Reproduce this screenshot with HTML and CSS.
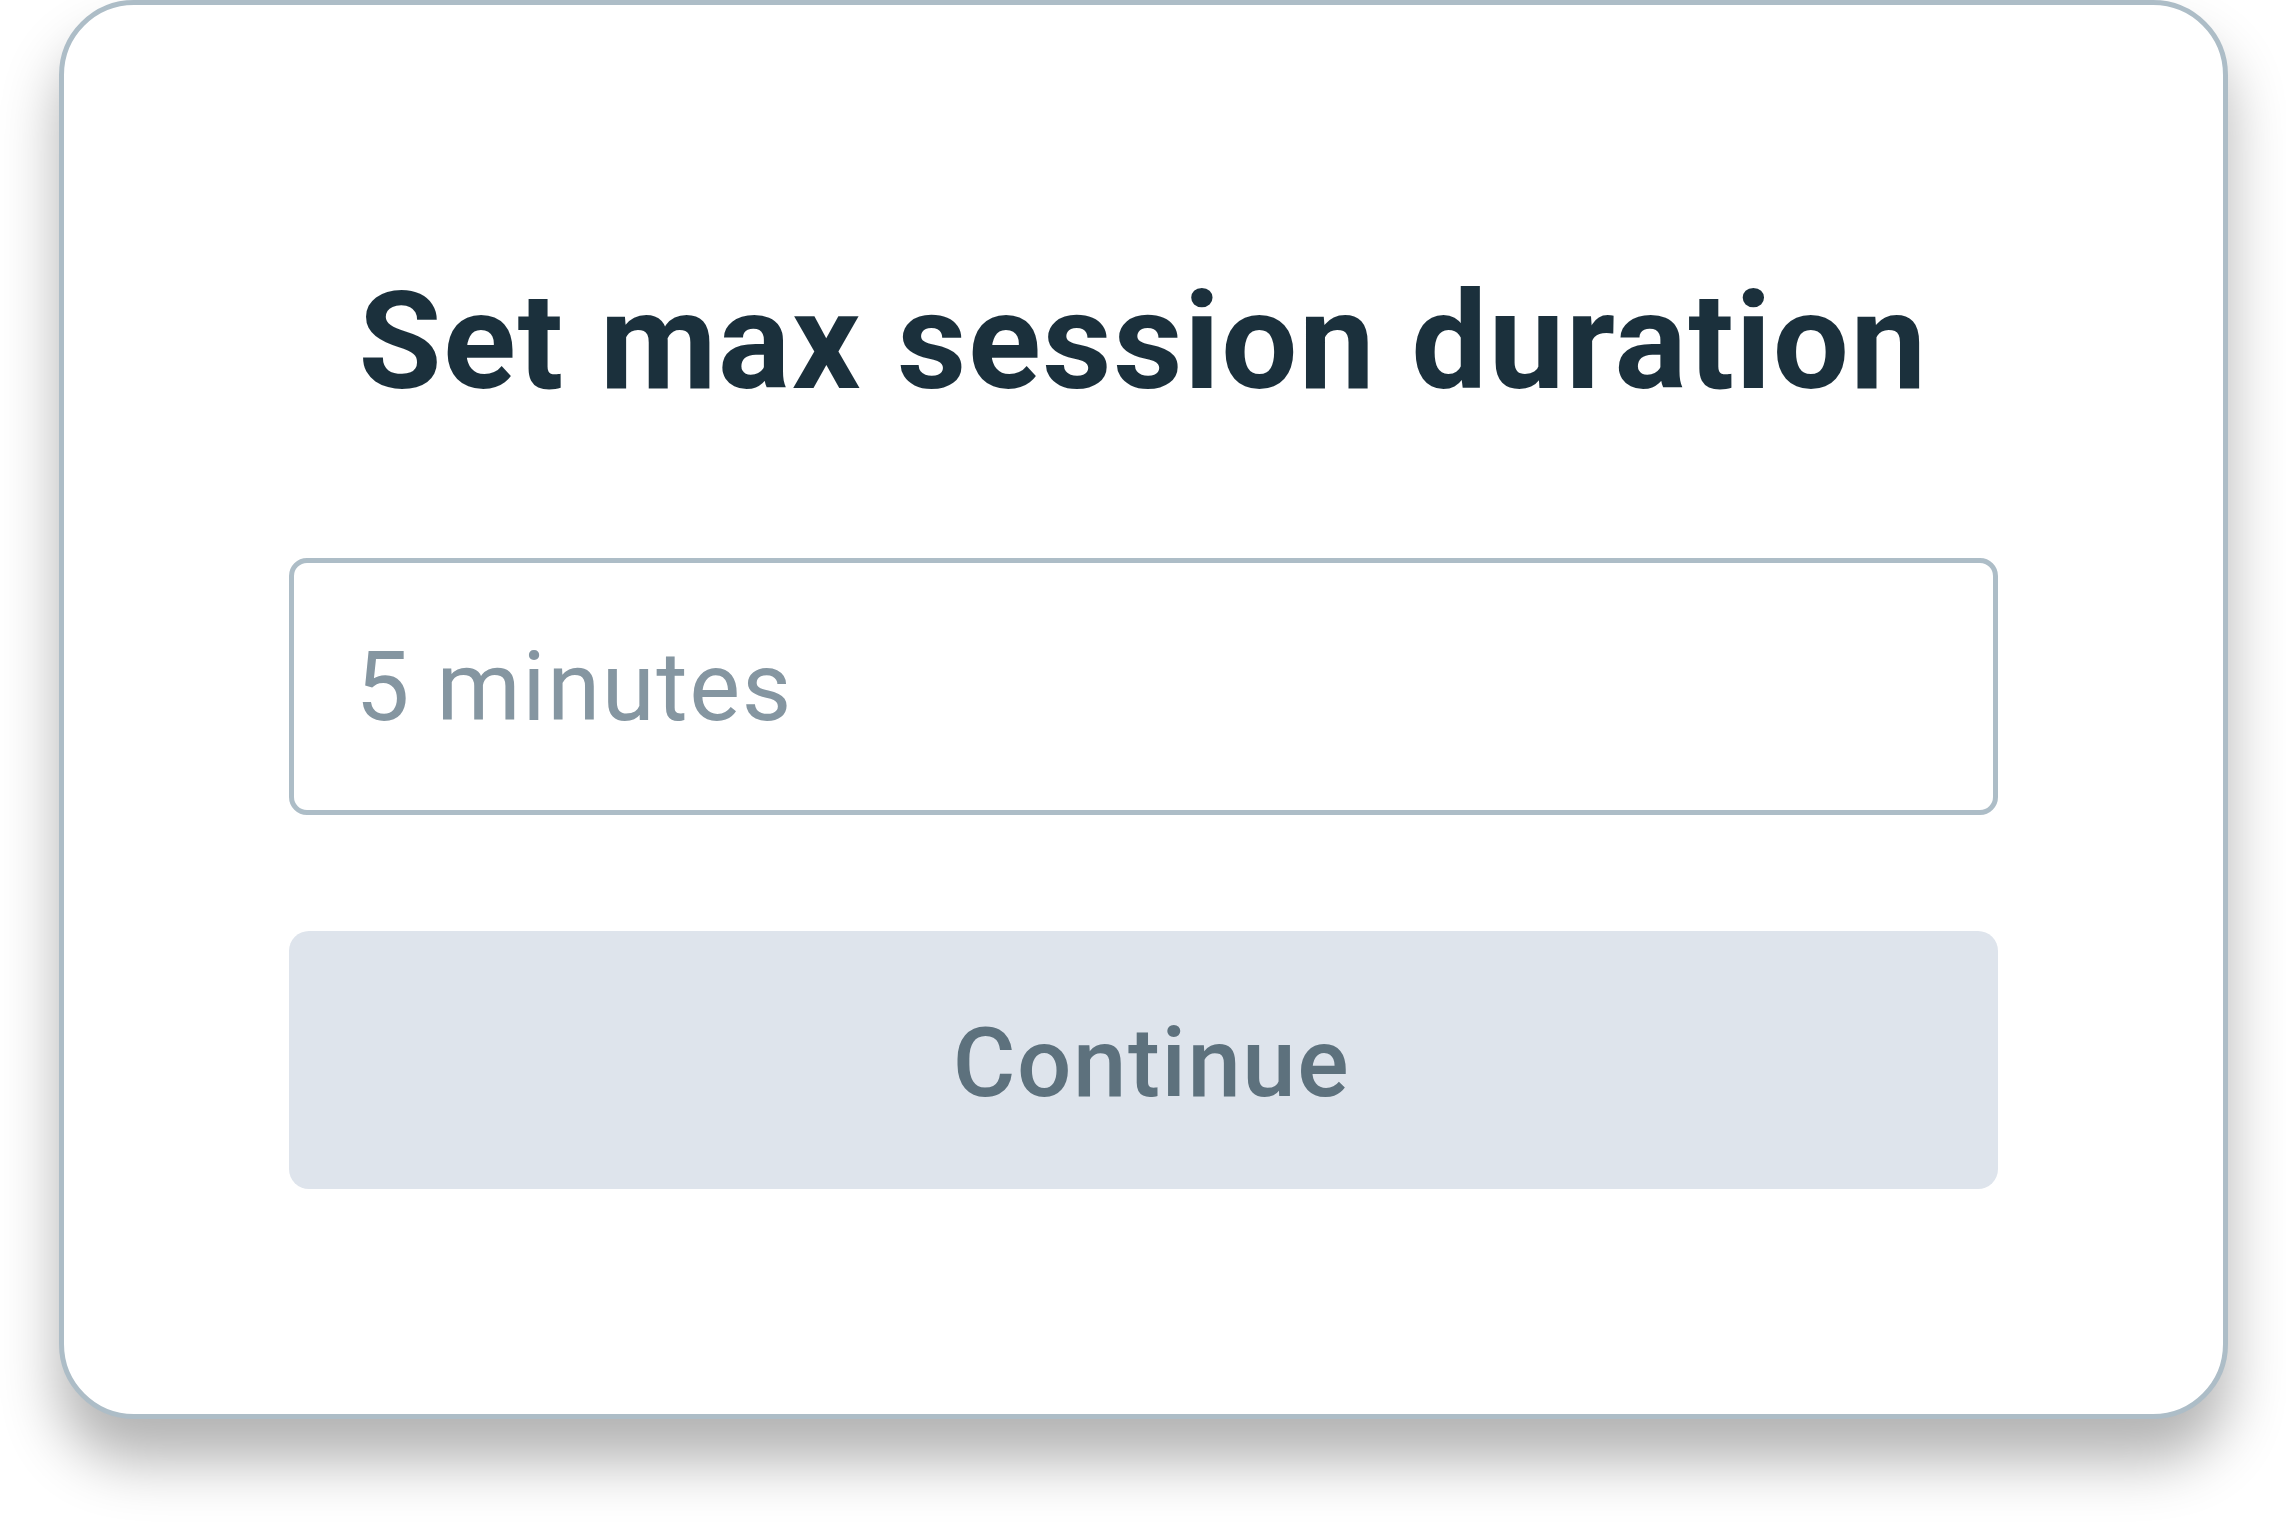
FILE: index.html
```html
<!DOCTYPE html>
<html lang="en">
<head>
<meta charset="utf-8">
<title>Set max session duration</title>
<link rel="stylesheet" href="styles.css">
</head>
<body>
<main class="stage">
  <section class="card">
    <h1 class="title">Set max session duration</h1>
    <div class="field" role="textbox">5 minutes</div>
    <button class="continue" type="button">Continue</button>
  </section>
</main>
</body>
</html>
```

FILE: styles.css
```css
html, body {
  margin: 0;
  padding: 0;
  background: #ffffff;
}

.stage {
  width: 2286px;
  height: 1536px;
  display: flex;
  justify-content: center;
  align-items: flex-start;
  overflow: hidden;
}

.card {
  box-sizing: border-box;
  width: 2169px;
  height: 1419px;
  background: #ffffff;
  border: 5px solid #adbdc7;
  border-radius: 75px;
  padding: 256px 225px 225px;
  display: flex;
  flex-direction: column;
  box-shadow: 0 42px 58px rgba(0, 0, 0, 0.3);
}

.title {
  margin: 0 0 135px;
  font-family: Roboto, "Liberation Sans", sans-serif;
  font-weight: 700;
  font-size: 135px;
  line-height: 162px;
  color: #1b303c;
  text-align: center;
  letter-spacing: 1.5px;
}

.field {
  box-sizing: border-box;
  height: 257px;
  border: 5px solid #adbdc7;
  border-radius: 18px;
  padding: 0 62px;
  display: flex;
  align-items: center;
  font-family: Roboto, "Liberation Sans", sans-serif;
  font-weight: 400;
  font-size: 96px;
  letter-spacing: 1.6px;
  color: #8596a1;
  margin-bottom: 116px;
}

.continue {
  box-sizing: border-box;
  height: 258px;
  border: none;
  border-radius: 20px;
  background: #dee4ec;
  font-family: Roboto, "Liberation Sans", sans-serif;
  font-weight: 500;
  font-size: 96px;
  letter-spacing: 1.5px;
  color: #5d717d;
  padding: 6px 0 0 17px;
  cursor: pointer;
}
```
